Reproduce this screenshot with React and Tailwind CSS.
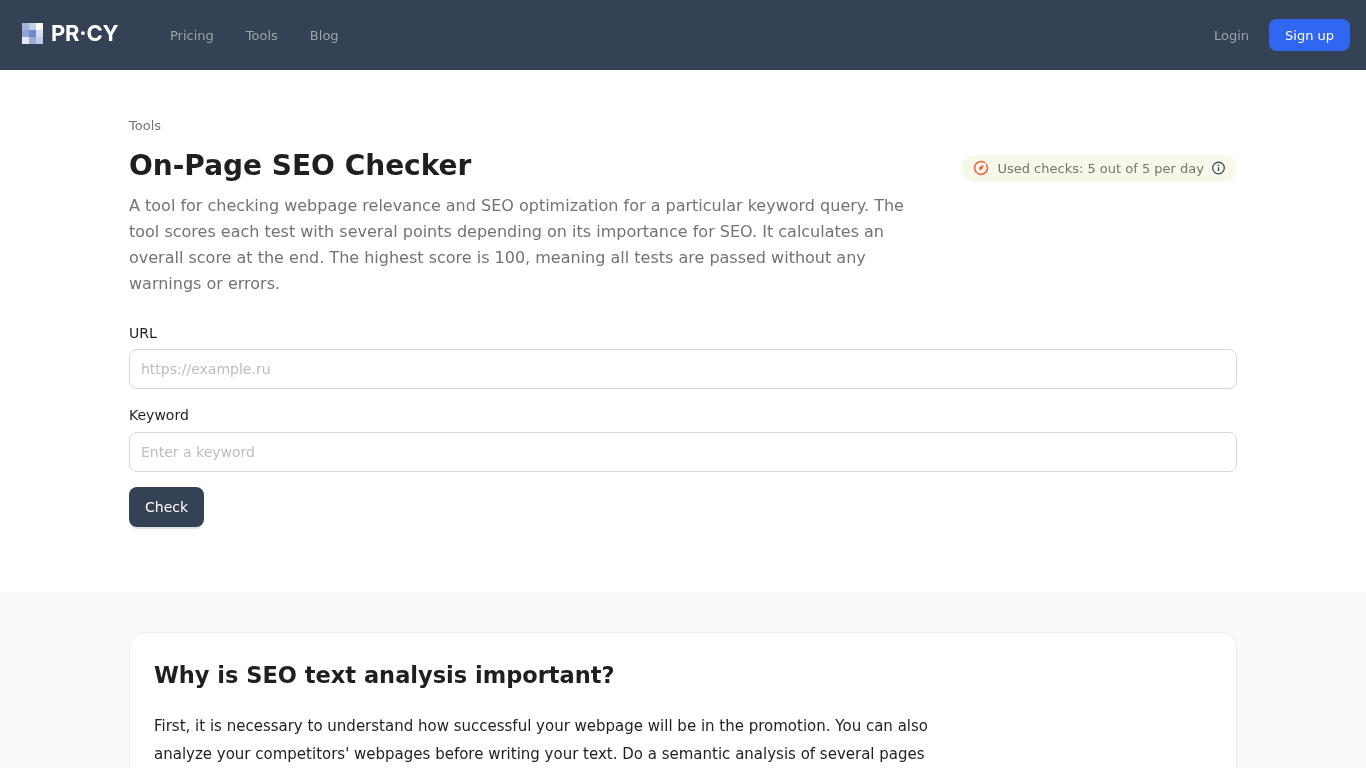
function Logo() {
  const cells = ["#a3b4da", "#c3cee8", "#f8f9fc", "#8fa4d6", "#7089cb", "#d6ddef", "#e3e8f4", "#9aadd9", "#c0cbe5"];
  return (
    <div className="grid h-[21px] w-[21px] grid-cols-3 grid-rows-3">
      {cells.map((c, i) => (
        <div key={i} style={{ backgroundColor: c }} />
      ))}
    </div>
  );
}

function Gauge() {
  return (
    <svg width="16" height="16" viewBox="0 0 16 16" fill="none">
      <path d="M11.6 2.6 A6.4 6.4 0 1 0 13.4 4.4" stroke="#e8693f" strokeWidth="1.6" strokeLinecap="round" />
      <path d="M5.9 10.1 L6.5 6.8 L10.9 5.1 L9.2 9.4 Z" fill="#e8693f" />
    </svg>
  );
}

function Info() {
  return (
    <svg width="14" height="14" viewBox="0 0 14 14" fill="none">
      <circle cx="6.5" cy="7" r="5.8" stroke="#344054" strokeWidth="1.2" />
      <path d="M6.5 6.2V10" stroke="#344054" strokeWidth="1.3" />
      <circle cx="6.5" cy="4.3" r="0.8" fill="#344054" />
    </svg>
  );
}

function Field({ label, placeholder, labelClass }) {
  return (
    <div className={labelClass}>
      <label className="block text-[14px] leading-[20px] text-[#1f1f1f]">{label}</label>
      <input
        placeholder={placeholder}
        className="block h-[40px] w-full rounded-lg border border-[#d4d6d9] bg-white px-[11px] text-[14px] text-[#1f1f1f] outline-none placeholder:text-[#bbbdc0]"
      />
    </div>
  );
}

export default function App() {
  return (
    <div className="h-screen overflow-hidden font-['DejaVu_Sans',sans-serif] [will-change:transform]">
      <header className="flex h-[70px] items-center justify-between bg-[#354154] pl-[22px] pr-[16px]">
        <div className="flex items-center">
          <div className="mb-[3px] flex w-[97px] items-center gap-[8px]">
            <Logo />
            <span className="mb-[1px] font-['Inter',sans-serif] text-[22px] font-bold leading-none tracking-[-0.2px] text-white">PR·CY</span>
          </div>
          <nav className="ml-[51px] mt-[1px] flex gap-[32px] text-[13px] text-[#9ca3af]">
            <span>Pricing</span>
            <span>Tools</span>
            <span>Blog</span>
          </nav>
        </div>
        <div className="flex items-center gap-[20px] text-[13px]">
          <span className="mt-[1px] text-[#9ca3af]">Login</span>
          <button className="h-[32px] rounded-lg bg-[#3067f0] px-[16px] pt-[1px] text-white">Sign up</button>
        </div>
      </header>

      <main className="mx-auto w-[1108px] pt-[48px] pb-[65px]">
        <div className="text-[13px] leading-[16px] text-[#737373]">Tools</div>
        <div className="mt-[12px] flex items-start justify-between">
          <div className="w-[800px]">
            <h1 className="text-[28px] font-bold leading-[40px] text-[#1f1f1f]">On-Page SEO Checker</h1>
            <p className="mt-[7px] text-[16px] leading-[26px] text-[#737373]">
              A tool for checking webpage relevance and SEO optimization for a particular keyword query. The tool scores each test with several points depending on its importance for SEO. It calculates an overall score at the end. The highest score is 100, meaning all tests are passed without any warnings or errors.
            </p>
          </div>
          <div className="mt-[9px] flex h-[27px] items-center gap-[8px] rounded-full bg-[#f7f7ea] pl-[11px] pr-[11px] text-[13px] text-[#75756d]">
            <span className="mb-[2px] flex"><Gauge /></span>
            <span>Used checks: 5 out of 5 per day</span>
            <span className="mb-[2px] flex"><Info /></span>
          </div>
        </div>

        <Field label="URL" placeholder="https://example.ru" labelClass="mt-[26px] flex flex-col gap-[6px]" />
        <Field label="Keyword" placeholder="Enter a keyword" labelClass="mt-[16px] flex flex-col gap-[7px]" />
        <button className="mt-[15px] h-[40px] rounded-lg bg-[#354154] px-[16px] text-[14px] text-white shadow-[0_2px_1px_#dde3ec]">Check</button>
      </main>

      <section className="bg-[#f8f9fb] pt-[40px]">
        <div className="mx-auto w-[1108px] rounded-2xl border border-[#eceef1] bg-white px-[24px] pt-[24px] pb-[24px]">
          <h2 className="text-[22.5px] font-bold leading-[36px] text-[#1f1f1f]">Why is SEO text analysis important?</h2>
          <p className="mt-[19px] w-[790px] text-[15px] leading-[28px] text-[#1f1f1f]">
            First, it is necessary to understand how successful your webpage will be in the promotion. You can also analyze your competitors' webpages before writing your text. Do a semantic analysis of several pages
          </p>
        </div>
      </section>
    </div>
  );
}
